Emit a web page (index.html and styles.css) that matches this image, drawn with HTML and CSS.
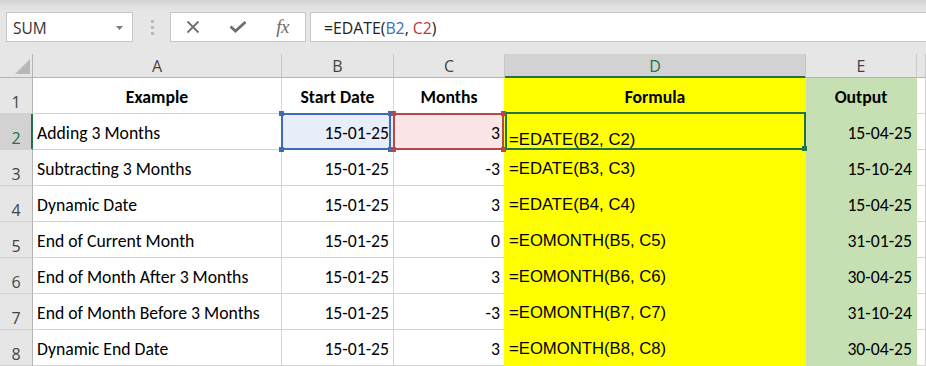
FILE: index.html
```html
<!DOCTYPE html>
<html lang="en">
<head>
<meta charset="utf-8">
<title>EDATE and EOMONTH</title>
<link rel="stylesheet" href="styles.css">
</head>
<body>
<div class="app">
  <div class="toolbar">
    <div class="namebox">
      <span class="name">SUM</span>
      <svg class="caret" width="7" height="4" viewBox="0 0 7 4"><polygon points="0,0 7,0 3.5,4" fill="#7a7a7a"/></svg>
    </div>
    <div class="sep">
      <svg width="3" height="15" viewBox="0 0 3 15"><rect x="0" y="0" width="3" height="3" fill="#b9b9b9"/><rect x="0" y="6" width="3" height="3" fill="#b9b9b9"/><rect x="0" y="12" width="3" height="3" fill="#b9b9b9"/></svg>
    </div>
    <div class="fxbox">
      <span class="slot"><svg width="14" height="14" viewBox="0 0 14 14"><path d="M1.5 1.5 L12.5 12.5 M12.5 1.5 L1.5 12.5" stroke="#6f6f6f" stroke-width="1.8" fill="none"/></svg></span>
      <span class="slot"><svg width="18" height="12" viewBox="0 0 18 12"><path d="M1.5 5.5 L6.5 10 L16.5 1" stroke="#6f6f6f" stroke-width="2.8" fill="none"/></svg></span>
      <span class="slot fx">fx</span>
    </div>
    <div class="formula">=EDATE(<span class="rb">B2</span>, <span class="rr">C2</span>)</div>
  </div>

  <div class="sheet">
    <div class="ch corner"><svg width="15" height="15" viewBox="0 0 15 15"><polygon points="15,0 15,15 0,15" fill="#b8b8b8"/></svg></div>
    <div class="ch">A</div>
    <div class="ch">B</div>
    <div class="ch">C</div>
    <div class="ch sel">D</div>
    <div class="ch">E</div>
    <div class="ch"></div>

    <div class="rh">1</div>
    <div class="c hd">Example</div>
    <div class="c hd">Start Date</div>
    <div class="c hd cy">Months</div>
    <div class="c hd y">Formula</div>
    <div class="c hd g">Output</div>
    <div class="c"></div>

    <div class="rh sel">2</div>
    <div class="c">Adding 3 Months</div>
    <div class="c n fb">15-01-25<span class="ref blue"><i class="k tl"></i><i class="k tr"></i><i class="k bl"></i><i class="k br"></i></span></div>
    <div class="c n cy fr">3<span class="ref red"><i class="k tl"></i><i class="k tr"></i><i class="k bl"></i><i class="k br"></i></span></div>
    <div class="c f y low">=EDATE(B2, C2)<span class="active"><i class="handle"></i></span></div>
    <div class="c n g">15-04-25</div>
    <div class="c"></div>

    <div class="rh">3</div>
    <div class="c">Subtracting 3 Months</div>
    <div class="c n">15-01-25</div>
    <div class="c n cy">-3</div>
    <div class="c f y">=EDATE(B3, C3)</div>
    <div class="c n g">15-10-24</div>
    <div class="c"></div>

    <div class="rh">4</div>
    <div class="c">Dynamic Date</div>
    <div class="c n">15-01-25</div>
    <div class="c n cy">3</div>
    <div class="c f y">=EDATE(B4, C4)</div>
    <div class="c n g">15-04-25</div>
    <div class="c"></div>

    <div class="rh">5</div>
    <div class="c">End of Current Month</div>
    <div class="c n">15-01-25</div>
    <div class="c n cy">0</div>
    <div class="c f y">=EOMONTH(B5, C5)</div>
    <div class="c n g">31-01-25</div>
    <div class="c"></div>

    <div class="rh">6</div>
    <div class="c">End of Month After 3 Months</div>
    <div class="c n">15-01-25</div>
    <div class="c n cy">3</div>
    <div class="c f y">=EOMONTH(B6, C6)</div>
    <div class="c n g">30-04-25</div>
    <div class="c"></div>

    <div class="rh">7</div>
    <div class="c">End of Month Before 3 Months</div>
    <div class="c n">15-01-25</div>
    <div class="c n cy">-3</div>
    <div class="c f y">=EOMONTH(B7, C7)</div>
    <div class="c n g">31-10-24</div>
    <div class="c"></div>

    <div class="rh">8</div>
    <div class="c">Dynamic End Date</div>
    <div class="c n">15-01-25</div>
    <div class="c n cy">3</div>
    <div class="c f y">=EOMONTH(B8, C8)</div>
    <div class="c n g">30-04-25</div>
    <div class="c"></div>
  </div>
</div>
</body>
</html>
```
FILE: styles.css
```css
html, body {
  margin: 0;
  padding: 0;
}
body {
  width: 926px;
  height: 366px;
  overflow: hidden;
  background: #e6e6e6;
}
.app {
  width: 926px;
  height: 366px;
  overflow: hidden;
}

/* ---------- toolbar / formula bar ---------- */
.toolbar {
  height: 54px;
  box-sizing: border-box;
  padding-top: 12px;
  display: flex;
  align-items: flex-start;
  background: linear-gradient(to bottom, #d2d2d2 0px, #dfdfdf 6px, #e6e6e6 12px, #e6e6e6 100%);
}
.namebox {
  margin-left: 6px;
  width: 127px;
  height: 30px;
  box-sizing: border-box;
  border: 1px solid #c6c6c6;
  background: #fff;
  display: flex;
  align-items: center;
  padding: 1px 9px 0 6px;
  font-family: "Open Sans", "Noto Sans", sans-serif;
  font-size: 15.5px;
  color: #333;
}
.namebox .name {
  flex: 1;
  line-height: 20px;
}
.caret {
  display: block;
}
.sep {
  width: 37px;
  height: 30px;
  display: flex;
  align-items: flex-start;
  justify-content: center;
  padding-top: 8px;
  box-sizing: border-box;
}
.sep svg {
  display: block;
  margin-left: 1px;
}
.fxbox {
  width: 136px;
  height: 30px;
  box-sizing: border-box;
  border: 1px solid #c6c6c6;
  background: #fff;
  display: flex;
  align-items: center;
}
.slot {
  width: 45px;
  height: 28px;
  display: flex;
  align-items: center;
  justify-content: center;
}
.slot svg {
  display: block;
}
.fx {
  font-family: "Liberation Serif", serif;
  font-style: italic;
  font-size: 19px;
  color: #6b6b6b;
  letter-spacing: -0.5px;
  padding-bottom: 1px;
}
.formula {
  flex: 1;
  margin-left: 4px;
  margin-right: -2px;
  height: 30px;
  box-sizing: border-box;
  border: 1px solid #c6c6c6;
  background: #fff;
  display: flex;
  align-items: center;
  padding: 2px 0 0 13px;
  font-family: "Open Sans", "Noto Sans", sans-serif;
  font-size: 15.8px;
  line-height: 20px;
  color: #222;
  white-space: pre;
}
.rb { color: #3a6cc0; }
.rr { color: #b8393e; }

/* ---------- sheet grid ---------- */
.sheet {
  display: grid;
  grid-template-columns: 33px 249px 112px 111px 301px 111px 9px;
  grid-template-rows: 24px repeat(8, 36px);
  background: #fff;
}
.ch {
  box-sizing: border-box;
  background: #e6e6e6;
  border-right: 1px solid #c8c8c8;
  border-bottom: 1px solid #b4b4b4;
  display: flex;
  align-items: flex-end;
  justify-content: center;
  padding-bottom: 1px;
  font-family: "Open Sans", "Noto Sans", sans-serif;
  font-size: 16px;
  line-height: 20px;
  color: #444;
}
.ch.sel {
  background: #d2d2d2;
  color: #217346;
  border-bottom-color: #217346;
  box-shadow: inset 0 -1px 0 #217346;
}
.ch.corner {
  justify-content: flex-end;
  padding: 0 2px 3px 0;
  border-right-color: #b4b4b4;
}
.ch.corner svg {
  display: block;
}
.rh {
  box-sizing: border-box;
  background: #e6e6e6;
  border-right: 1px solid #b4b4b4;
  border-bottom: 1px solid #d0d0d0;
  display: flex;
  align-items: flex-end;
  justify-content: center;
  padding-bottom: 1px;
  font-family: "Open Sans", "Noto Sans", sans-serif;
  font-size: 16px;
  line-height: 20px;
  color: #444;
}
.rh.sel {
  background: #d2d2d2;
  color: #217346;
  border-right-color: #217346;
  box-shadow: inset -1px 0 0 #217346;
}

.c {
  position: relative;
  box-sizing: border-box;
  border-right: 1px solid #d4d4d4;
  border-bottom: 1px solid #d4d4d4;
  display: flex;
  align-items: flex-end;
  padding: 0 4px 6px 4px;
  font-family: Carlito, Calibri, "Lato", sans-serif;
  font-size: 17.7px;
  line-height: 20px;
  color: #000;
  white-space: nowrap;
}
.c.n { justify-content: flex-end; }
.c.hd {
  justify-content: center;
  font-weight: bold;
}
.c.f {
  font-family: "Liberation Sans", Arial, sans-serif;
  font-size: 16.7px;
}
.c.low {
  padding-bottom: 0;
  line-height: 18px;
}
.c.y {
  background: #ffff00;
  border-right-color: #ffff00;
  border-bottom-color: #ffff00;
}
.c.cy { border-right-color: #ffff00; }
.c.g {
  background: #c6e0b4;
  border-right-color: #c6e0b4;
  border-bottom-color: #c6e0b4;
}
.c.fb { background: #e8eef9; }
.c.fr { background: #fbe5e6; }

/* ---------- reference highlight overlays ---------- */
.ref {
  position: absolute;
  top: -1px;
  bottom: -1px;
  left: -1px;
  border: 2px solid;
  z-index: 3;
}
.ref.blue { border-color: #3f6cb8; right: 2px; }
.ref.red { border-color: #b8474c; right: 0; z-index: 4; }
.k {
  position: absolute;
  width: 5px;
  height: 5px;
}
.blue .k { background: #3f6cb8; }
.red .k { background: #b8474c; }
.k.tl { top: -4px; left: -4px; }
.k.tr { top: -4px; right: -4px; }
.k.bl { bottom: -4px; left: -4px; }
.k.br { bottom: -4px; right: -4px; }

.active {
  position: absolute;
  top: -2px;
  left: 0;
  right: -1px;
  bottom: -1px;
  border: 2px solid #217346;
  z-index: 2;
}
.handle {
  position: absolute;
  width: 5px;
  height: 5px;
  right: -3px;
  bottom: -3px;
  background: #217346;
}
```
